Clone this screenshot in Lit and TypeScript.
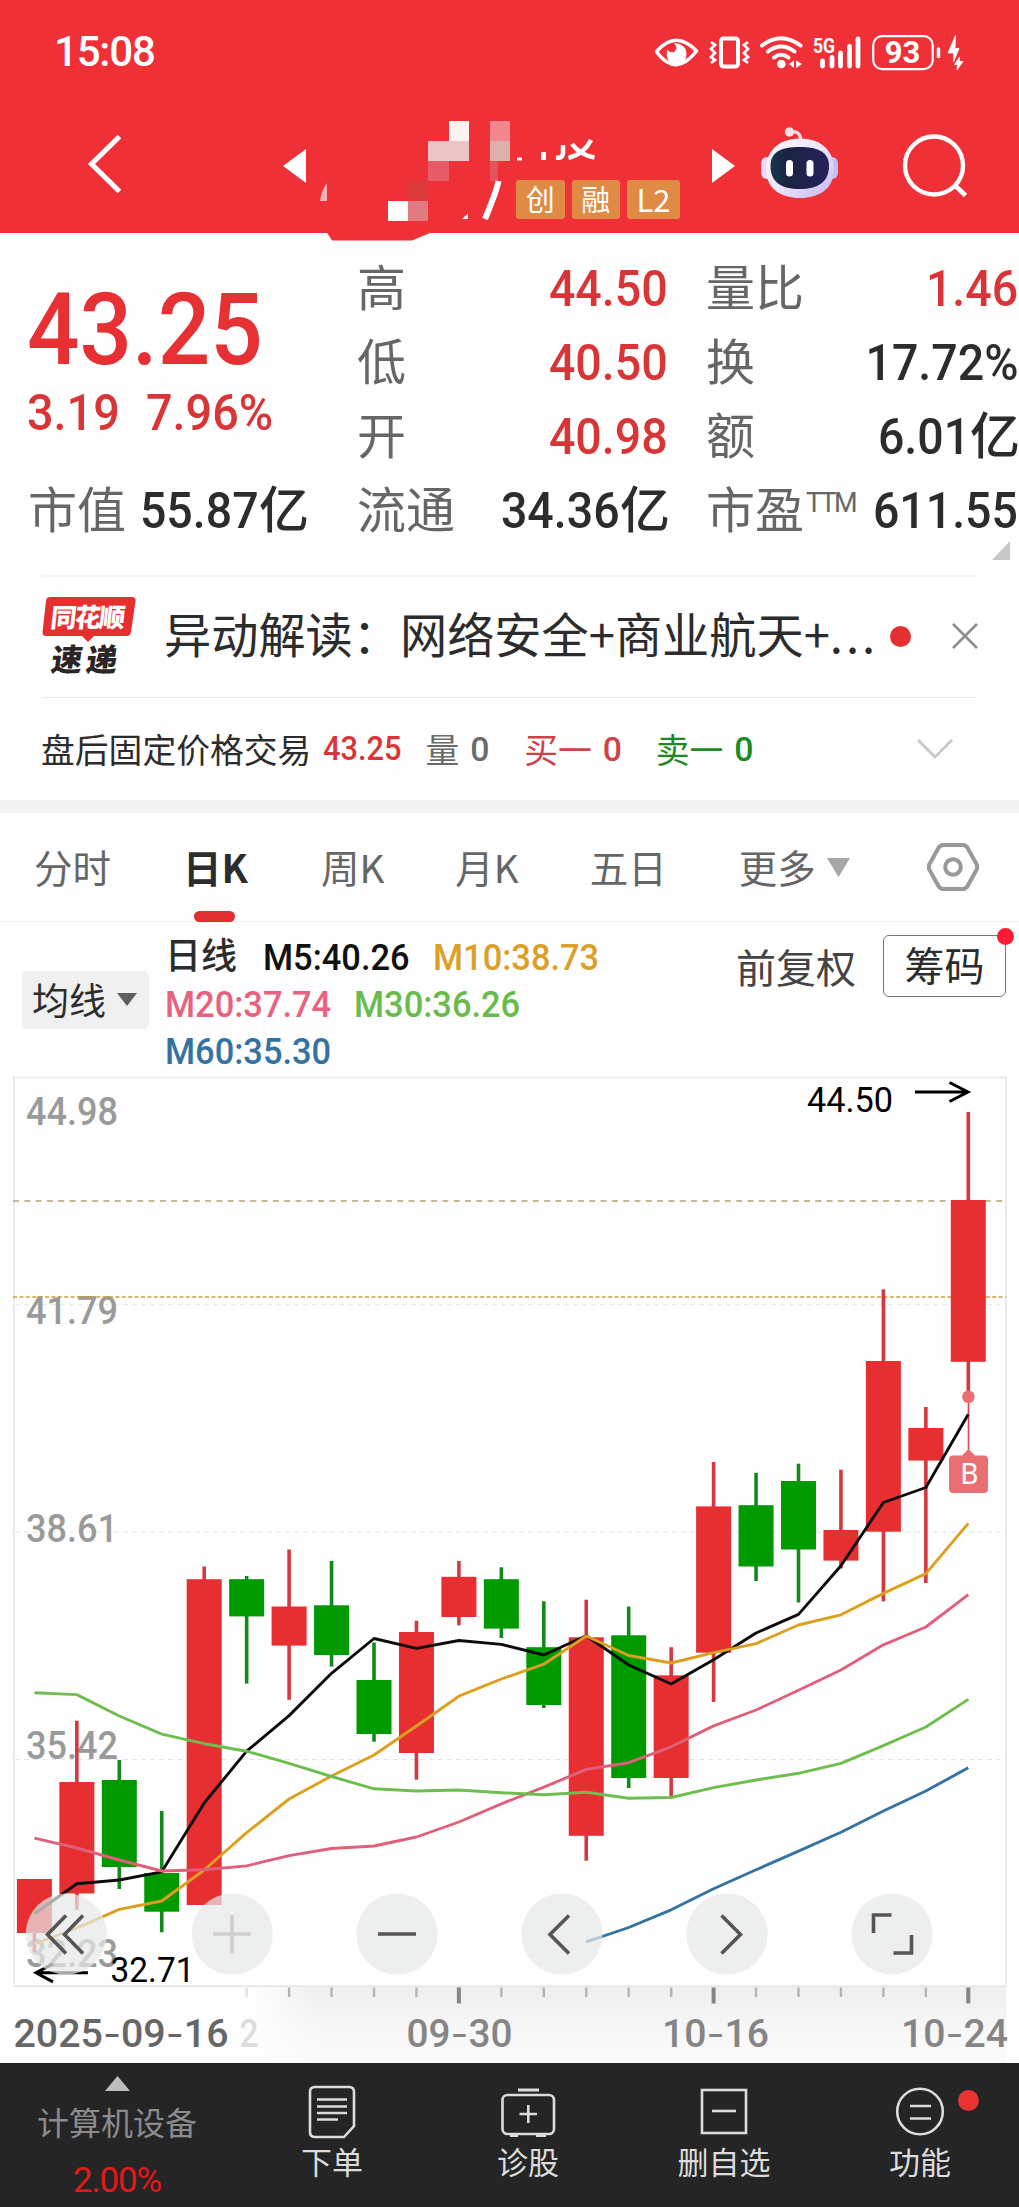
import { LitElement, html, svg, css } from "lit";
import { customElement } from "lit/decorators.js";

const X0 = 34.4;
const STEP = 42.45;
const TOP = 1070;
const cx = (i: number) => X0 + STEP * i;
const py = (v: number) => v - TOP;

// [direction, body top, body bottom, wick top, wick bottom]
const candles: [string, number, number, number, number][] = [
  ["up", 1879, 1933, 1879, 1952],
  ["up", 1782, 1893.5, 1720.7, 1909.7],
  ["down", 1780, 1867, 1760, 1889],
  ["down", 1873, 1911.7, 1811, 1932.3],
  ["up", 1579.2, 1905, 1566.5, 1905],
  ["down", 1579.2, 1616.4, 1576, 1683.6],
  ["up", 1606.5, 1645.6, 1549.5, 1699.8],
  ["down", 1605.3, 1655, 1561, 1666.6],
  ["down", 1680, 1734, 1642.5, 1741.7],
  ["up", 1632, 1753, 1620.7, 1779.7],
  ["up", 1576.8, 1617, 1561, 1625.4],
  ["down", 1579.2, 1628.6, 1567.3, 1638],
  ["down", 1647.2, 1705, 1601.3, 1708],
  ["up", 1637.3, 1835.8, 1599.7, 1860.7],
  ["down", 1635.3, 1778, 1606.5, 1788],
  ["up", 1675.3, 1778, 1647.2, 1796.7],
  ["up", 1506.4, 1652.7, 1462, 1702],
  ["down", 1505.2, 1566.5, 1472.8, 1581],
  ["down", 1481, 1549.5, 1463.7, 1602.5],
  ["up", 1530, 1560.6, 1469.7, 1568.5],
  ["up", 1361, 1531.7, 1289.3, 1601.3],
  ["up", 1428, 1460.6, 1407, 1583],
  ["up", 1200, 1361.8, 1112, 1396.5],
];

const averages: { cls: string; from: number; ys: number[] }[] = [
  { cls: "m5", from: 0, ys: [1913.7, 1883.7, 1880, 1871.8, 1803, 1751.2, 1715.6, 1673.3, 1638.5, 1648.4, 1640.5, 1644.4, 1655, 1635.7, 1665, 1684, 1659.8, 1633, 1614.4, 1565.7, 1502.5, 1487.5, 1414.3] },
  { cls: "m10", from: 0, ys: [1944, 1928, 1909.4, 1901, 1870, 1832.6, 1799, 1776, 1755, 1726, 1696.2, 1679, 1664.2, 1636, 1655.5, 1663, 1652.7, 1643.6, 1625, 1614.8, 1593.4, 1573.6, 1523.4] },
  { cls: "m20", from: 0, ys: [1838.2, 1848, 1860, 1871, 1869.8, 1865.9, 1855.6, 1848.5, 1846, 1837, 1822, 1803.8, 1787.2, 1769.4, 1762.7, 1746.8, 1725.9, 1710, 1690.3, 1670, 1644.8, 1627, 1594.6] },
  { cls: "m30", from: 0, ys: [1692.7, 1694.6, 1716, 1734.2, 1743.7, 1751.2, 1763.4, 1776.5, 1788.8, 1791, 1790, 1792.7, 1794.7, 1792.3, 1798.2, 1797.5, 1787.6, 1780, 1773.3, 1763.4, 1745.7, 1727, 1699.4] },
  { cls: "m60", from: 13, ys: [1941.8, 1927.5, 1909.8, 1888.8, 1869.8, 1851.2, 1832.2, 1811, 1791, 1767.8] },
];

@customElement("kline-chart")
export class KlineChart extends LitElement {
  static styles = css`
    :host { display: block; height: 993px; position: relative; }
    svg { display: block; }
    text { font-family: Roboto, "Noto Sans CJK SC", sans-serif; }
    .frame { fill: none; stroke: #e6e6e8; stroke-width: 1.6; }
    .grid { stroke: #e6e6e6; stroke-width: 1; stroke-dasharray: 5 4; }
    .price { stroke: #b3a273; stroke-width: 1.5; stroke-dasharray: 6 5.3; }
    .cost { stroke: #cf9d3c; stroke-width: 1.6; stroke-dasharray: 4 2.4; }
    .up { fill: #e72f32; }
    .down { fill: #009900; }
    .wick.up { fill: #d23a3f; }
    .wick.down { fill: #12891a; }
    .ma { fill: none; stroke-width: 2.9; stroke-linejoin: round; }
    .m5 { stroke: #0c0c0c; }
    .m10 { stroke: #dc9f1e; }
    .m20 { stroke: #e0607b; }
    .m30 { stroke: #6fbd50; }
    .m60 { stroke: #35729f; }
    .level { fill: #9a9a9a; font-size: 38.5px; font-weight: 500; }
    .mark { fill: #000; font-size: 35px; font-weight: 400; }
    .arrow { fill: none; stroke: #000; stroke-width: 3; }
    .date { fill: #858585; font-size: 38.5px; font-weight: 500; }
    .date.first { fill: #666; }
    .date.ghost { fill: #dcdcdc; }
    .dash { font-family: Inter, sans-serif; font-weight: 400; }
    .tick { fill: #b4b4b4; }
    .tick.major { fill: #858585; }
    .buy { fill: #ea6f73; }
    .b { fill: #fff; font-size: 29px; font-weight: 400; }
    .knob { fill: rgba(230, 231, 232, 0.72); }
    .glyph { fill: none; stroke: #555; stroke-width: 3.6; }
    .glyph.off { stroke: #cfcfcf; }
  `;

  private label(cls: string, s: string, x: number, base: number, w: number) {
    return svg`<text class=${cls} x=${x} y=${py(base)} textLength=${w} lengthAdjust="spacingAndGlyphs">${s}</text>`;
  }

  private date(cls: string, parts: string[], x: number, w: number) {
    return svg`<text class=${cls} x=${x} y=${py(2046.5)} textLength=${w} lengthAdjust="spacingAndGlyphs">${parts.map((p, i) =>
      i ? svg`<tspan class="dash">-</tspan><tspan>${p}</tspan>` : svg`<tspan>${p}</tspan>`)}</text>`;
  }

  render() {
    const knobs = [66.3, 232.3, 397, 562, 727, 892];
    return html`<svg width="1019" height="993" viewBox="0 0 1019 993">
      <defs>
        <linearGradient id="axis" x1="0" y1="0" x2="0" y2="1">
          <stop offset="0" stop-color="#eeeeee" /><stop offset="0.55" stop-color="#f7f7f7" /><stop offset="1" stop-color="#fbfbfb" />
        </linearGradient>
        <linearGradient id="fade" x1="0" y1="0" x2="1" y2="0">
          <stop offset="0" stop-color="#fdfdfd" /><stop offset="0.8" stop-color="#fdfdfd" /><stop offset="1" stop-color="#fdfdfd" stop-opacity="0" />
        </linearGradient>
      </defs>
      <rect x="14" y=${py(1986)} width="992" height="77" fill="url(#axis)" />
      <rect x="0" y=${py(1987)} width="320" height="76" fill="url(#fade)" />
      <rect class="frame" x="14" y=${py(1077.5)} width="992" height="908.7" />
      ${[1304.7, 1532, 1759.5].map((y) => svg`<line class="grid" x1="15" x2="1006" y1=${py(y)} y2=${py(y)} />`)}
      <line class="price" x1="13" x2="1006" y1=${py(1201)} y2=${py(1201)} />
      ${this.label("level", "44.98", 26, 1125, 92)}
      ${this.label("level", "41.79", 26, 1324, 92)}
      ${this.label("level", "38.61", 26, 1542, 92)}
      ${this.label("level", "35.42", 26, 1759, 92)}
      ${this.label("level", "32.23", 26, 1967, 92)}
      <line class="cost" x1="13" x2="1006" y1=${py(1297)} y2=${py(1297)} />
      ${candles.map(([d, t, b, h, l], i) => svg`
        <rect class="wick ${d}" x=${cx(i) - 1.8} y=${py(h)} width="3.6" height=${l - h} />
        <rect class=${d} x=${cx(i) - 17.5} y=${py(t)} width="35" height=${b - t} />`)}
      <rect x="967.7" y=${py(1396)} width="1.6" height="56" fill="#d9464b" />
      <circle class="buy" cx="968.4" cy=${py(1396.8)} r="6.3" />
      ${averages.map((a) => svg`<polyline class="ma ${a.cls}" points=${a.ys.map((y, i) => `${cx(a.from + i)},${py(y)}`).join(" ")} />`)}
      <path class="buy" d="M953 385.5 H962 L968.5 379 L975 385.5 H984 Q988 385.5 988 389.5 V419 Q988 423 984 423 H953 Q949 423 949 419 V389.5 Q949 385.5 953 385.5Z" />
      <text class="b" x="969.5" y="414" text-anchor="middle">B</text>
      ${this.label("mark", "44.50", 807, 1112, 86)}
      <path class="arrow" d="M915 22 H968 M949.5 12.5 L968 22 L949.5 31.5" />
      ${this.label("mark", "32.71", 110.5, 1982, 84)}
      <path class="arrow" d="M88 902.8 H36 M53 893.8 L36 902.8 L53 911.8" />

      ${knobs.map((x) => svg`<circle class="knob" cx=${x} cy="864" r="40.6" />`)}
      <path class="glyph" d="M66 845.5 L47.5 864.5 L66 883.5 M83 845.5 L64.5 864.5 L83 883.5" />
      <path class="glyph off" d="M213 864 H250.5 M232 845 V883" />
      <path class="glyph" d="M378 864 H416" />
      <path class="glyph" d="M569 845.5 L550 864.5 L569 883.5" />
      <path class="glyph" d="M721.5 845.5 L740.5 864.5 L721.5 883.5" />
      <path class="glyph" d="M873.5 863 V845 H891.5 M911.5 865 V883 H893.5" />

      ${Array.from({ length: 18 }, (_, k) => k + 5).map((i) => {
        const major = i === 10 || i === 16 || i === 22;
        return svg`<rect class="tick ${major ? "major" : ""}" opacity=${i === 5 ? 0.35 : 1} x=${cx(i) - (major ? 2 : 1.2)} y="917.5" width=${major ? 4 : 2.4} height=${major ? 16 : 9.5} />`;
      })}
      ${this.date("date first", ["2025", "09", "16"], 13.5, 215)}
      ${this.date("date ghost", ["2"], 239.5, 19)}
      ${this.date("date", ["09", "30"], 406.5, 106)}
      ${this.date("date", ["10", "16"], 662, 107)}
      ${this.date("date", ["10", "24"], 901, 107)}
    </svg>`;
  }
}

@customElement("app-root")
export class AppRoot extends LitElement {
  static styles = css`
    :host {
      display: block; width: 1019px; height: 2207px; overflow: hidden; background: #fefefe;
      font-family: Roboto, "Noto Sans CJK SC", sans-serif; color: #2c2c2c;
    }
    * { box-sizing: border-box; }
    svg { display: block; flex: none; }
    .head { height: 233px; background: #ef3037; color: #fff; }
    .status { height: 100px; padding: 3px 0 0 54px; display: flex; align-items: center; }
    .time { font-size: 42px; font-weight: 500; letter-spacing: -1.2px; flex: 1; }
    .bar { height: 133px; display: flex; }
    .back { margin: 33px 0 0 85px; }
    .prev { margin: 49px 0 0 158px; }
    .title { position: relative; width: 380px; margin-left: 4px; height: 133px; padding: 80px 0 0 206px; }
    .mask { position: absolute; left: 0; top: 0; }
    .tags { display: flex; gap: 7px; }
    .tag { height: 39px; width: 48.5px; line-height: 37px; background: #e08b45; border-radius: 3px; font-size: 29px; text-align: center; font-family: "Noto Sans CJK SC", sans-serif; }
    .tag.wide { width: 53px; font-size: 31px; }
    .next { margin: 49px 0 0 22px; }
    .bot { margin: 24px 0 0 24px; }
    .find { margin: 31px 0 0 61px; }

    .quote { height: 342px; display: grid; grid-template-columns: 357px 349px 313px; padding-top: 19px; position: relative; }
    .price { font-size: 101px; line-height: 97px; font-weight: 500; color: #e63033; padding: 29px 0 0 27px; height: 128px; white-space: nowrap; }
    .price span { display: inline-block; transform: scaleX(0.915); transform-origin: left; }
    .chg { display: flex; gap: 20px; font-size: 50px; line-height: 60px; height: 74px; font-weight: 500; color: #d93537; padding: 3px 0 0 27px; margin-bottom: 20px; }
    .chg span { transform: scaleX(0.935); transform-origin: left; }
    .row { display: flex; height: 74px; align-items: center; justify-content: space-between; font-size: 50px; line-height: 74px; font-weight: 500; padding-right: 1px; }
    .v { display: flex; justify-content: flex-end; flex: 1; width: 0; white-space: nowrap; }
    .v span { transform: scaleX(0.93); transform-origin: right; }
    .v i { font-style: normal; width: 48px; }
    .k { color: #666; font-weight: 400; font-size: 49px; display: flex; margin-bottom: 8px; font-family: "Noto Sans CJK SC", sans-serif; }
    .k sup { font-size: 27px; line-height: 1; margin-top: 20px; vertical-align: baseline; font-family: Roboto, sans-serif; font-weight: 400; letter-spacing: -2.2px; padding-left: 2px; }
    .mid .row { padding-right: 38px; }
    .row.cap { padding-left: 28px; padding-right: 50px; }
    .red { color: #d93537; }
    .corner { position: absolute; right: 9px; top: 308px; }

    .news { margin: 0 43px 0 42px; height: 123px; display: flex; align-items: center; border-top: 2px solid #f5f5f5; border-bottom: 1.5px solid #ececec; }
    .logo { position: relative; width: 96px; height: 80px; flex: none; margin-bottom: 2px; }
    .logo span { position: absolute; font-family: "Noto Sans CJK SC", sans-serif; font-weight: 900; white-space: nowrap; }
    .l1 { color: #fff; font-size: 26px; line-height: 28px; left: 9px; top: 6px; letter-spacing: -1.8px; transform: skewX(-6deg); }
    .l2 { color: #2c2526; font-size: 31px; line-height: 31px; left: 10px; top: 46px; letter-spacing: 4px; transform: skewX(-8deg); }
    .headline { font-size: 47.2px; white-space: nowrap; margin-left: 26px; width: 726px; flex: none; margin-bottom: 9px; font-family: "Noto Sans CJK SC", sans-serif; }
    .headline i { font-style: normal; letter-spacing: 3px; }
    .dot { width: 21px; height: 21px; border-radius: 50%; background: #e72f32; margin-right: 40px; flex: none; margin-bottom: 2px; }
    .news .close { margin-bottom: 2px; }

    .after { height: 102px; display: flex; align-items: center; padding-left: 41px; font-size: 33.8px; padding-bottom: 1px; }
    .after b { font-weight: 500; margin-left: 12px; width: 80px; }
    .after b span { display: inline-block; transform: scaleX(0.91); transform-origin: left; }
    .after .q { color: #6a6a6a; margin-left: 22px; }
    .after .buy { color: #cc4247; margin-left: 38px; }
    .after .sell { color: #1c8a20; margin-left: 37px; }
    .after .q, .after .buy, .after .sell { display: flex; align-items: center; }
    .after em { font-style: normal; margin-left: 11px; font-weight: 500; width: 16px; margin-top: 2px; }
    .fold { margin-left: 166px; }
    .band { height: 13px; background: #f3f3f3; }

    .tabs { height: 109px; display: flex; align-items: center; border-bottom: 1.5px solid #f0eeee; color: #666; font-size: 38.5px; position: relative; padding-left: 34px; font-family: "Noto Sans CJK SC", sans-serif; }
    .tab { position: relative; line-height: 106px; height: 109px; }
    .tab.on { color: #2c2c2c; font-weight: 700; margin-left: 72px; }
    .tab.on::after { content: ""; position: absolute; left: 11px; bottom: 0; width: 41px; height: 11px; border-radius: 6px; background: #e12f30; }
    .w { margin-left: 73px; }
    .m { margin-left: 71px; }
    .f { margin-left: 71px; }
    .e { margin-left: 72px; }
    .more { margin-left: 11px; }
    .gear { margin-left: 76px; }

    .legend { height: 148px; display: flex; }
    .pick { margin: 49px 0 0 22px; width: 127px; height: 58px; background: #f0f0f0; border-radius: 5px; display: flex; align-items: center; padding: 0 0 2px 10px; font-size: 37px; font-family: "Noto Sans CJK SC", sans-serif; gap: 11px; }
    .mas { margin: 12px 0 0 16px; width: 480px; display: grid; align-content: flex-start; font-size: 37.5px; line-height: 47px; font-weight: 500; }
    .line { display: flex; height: 47px; }
    .line span { transform: scaleX(0.918); transform-origin: left; white-space: nowrap; }
    .line .d { transform: none; font-size: 36px; width: 98px; }
    .m5 { color: #111; width: 170px; }
    .m10 { color: #dca029; }
    .m20 { color: #e8627f; width: 189px; }
    .m30 { color: #69bb4b; }
    .m60 { color: #35729f; }
    .adj { margin: 16px 0 0 91px; font-size: 40px; line-height: 56px; color: #444; width: 147px; font-family: "Noto Sans CJK SC", sans-serif; }
    .chip { position: relative; margin-top: 13px; width: 123px; height: 62px; border: 1.5px solid #777; border-radius: 6px; font-size: 40px; line-height: 57px; text-align: center; font-family: "Noto Sans CJK SC", sans-serif; }
    .chip::after { content: ""; position: absolute; right: -9px; top: -8px; width: 17px; height: 17px; border-radius: 50%; background: #fb1c33; }

    .nav { height: 144px; background: #252525; display: grid; grid-template-columns: 234px repeat(4, 196px); color: #dcdcdc; }
    .sector { display: flex; flex-direction: column; align-items: center; padding-top: 13px; color: #8b8b8e; font-size: 32px; line-height: 40px; }
    .sector svg { margin-bottom: 13px; }
    .sector b { color: #e0191a; font-size: 35px; font-weight: 400; margin-top: 17px; letter-spacing: -1.2px; }
    .item { position: relative; display: flex; flex-direction: column; align-items: center; padding-top: 18px; font-size: 31px; line-height: 40px; }
    .item svg { margin-bottom: 3px; }
    .item .new { position: absolute; left: 136px; top: 27px; width: 21px; height: 21px; border-radius: 50%; background: #e93232; }
    .thin { fill: none; stroke: #dcdcdc; stroke-width: 2.6; }
  `;

  private row(k: unknown, v: string, unit = "", cls = "") {
    return html`<div class="row"><span class="k">${k}</span><div class="v ${cls}"><span>${v}</span>${unit ? html`<i>${unit}</i>` : ""}</div></div>`;
  }

  private statusIcons() {
    return html`<svg width="364" height="100" viewBox="655 0 364 100" fill="none" stroke="#fff">
      <path d="M657 48.5 Q676 27 696.500 48.500 Q676 75 657 50Z" transform="translate(0 0.500)" stroke-width="3.600" stroke-linejoin="round" />
      <path d="M674 41 Q679 46 674 50 Q670 51 667 47.500 Q665 62 677 63 Q687 62 686.500 51 Q686 42 674 41Z" fill="#fff" stroke="none" />
      <rect x="721" y="36.500" width="17" height="28" rx="2.500" stroke-width="4" />
      <path d="M711 40 L715 43 L711 47 L715 51 L711 55 L715 58 L711 61 M748 40 L744 43 L748 47 L744 51 L748 55 L744 58 L748 61" stroke-width="2.800" />
      <path d="M762 43.500 Q781 29 800.500 43.500" stroke-width="4" stroke-linecap="round" />
      <path d="M768 49.500 Q781 39.500 794.500 49.500" stroke-width="4" stroke-linecap="round" />
      <path d="M774 55.500 Q781 50 788.500 55.500" stroke-width="4" stroke-linecap="round" />
      <circle cx="781.300" cy="62" r="4.300" fill="#fff" stroke="none" />
      <path d="M789 62 L794 58.500 V66Z M796 58.500 L802 62 L796 66Z" fill="#fff" stroke="none" />
      <path d="M822.500 59 V64 M832 55.500 V64 M840.500 51 V64 M849.500 44.500 V64 M858 37 V64" stroke-width="4.800" stroke-linecap="round" />
      <text x="813" y="51" font-size="20" font-weight="700" fill="#fff" stroke="none" textLength="22" lengthAdjust="spacingAndGlyphs" font-family="Roboto">5G</text>
      <rect x="873.200" y="34.200" width="59.500" height="33" rx="9" stroke-width="2.200" />
      <path d="M938.500 47 V54.500" stroke-width="3.500" stroke-linecap="round" />
      <text x="902.500" y="61" font-size="31" font-weight="700" fill="#fff" stroke="none" text-anchor="middle" font-family="Roboto">93</text>
      <path d="M955.500 33.500 L948 51 H953.500 V60 L959 46.500 H955Z M959.500 55 L954.500 62.500 H957.500 L957 68 L963 59.500 H959.500Z" fill="#fff" stroke="#fff" stroke-width="0.800" />
    </svg>`;
  }

  private mask() {
    return html`<svg class="mask" width="380" height="142" viewBox="310 100 380 142">
      <path fill="#ef3037" d="M327 232.500 L332 240.500 H412 L431 232.500Z" />
      <path fill="#f8b5b8" d="M327 183 V201 H320 Q321 191 327 183Z" />
      <rect x="449" y="121" width="20" height="20" fill="#fff3f2" />
      <rect x="428" y="141" width="41" height="20" fill="#ecc3c7" />
      <rect x="428" y="161" width="21" height="20" fill="#e55b66" />
      <rect x="408" y="181" width="20" height="20" fill="#dc3a3b" />
      <rect x="388" y="201" width="20" height="20" fill="#fffdfc" />
      <rect x="408" y="201" width="20" height="20" fill="#e27a82" />
      <rect x="490" y="121" width="20" height="20" fill="#f28790" />
      <rect x="490" y="141" width="20" height="20" fill="#dcb0ad" />
      <rect x="490" y="161" width="8" height="20" fill="#e4525d" />
      <path fill="none" stroke="#fff" stroke-width="6" d="M498.500 181 Q497 190 485 219" />
      <path fill="#fff" d="M468 213.500 V219 H462Z M517 157.500 h5 v3 h-5z M541 152 h5 v8 h-5z" />
      <path fill="none" stroke="#fff" stroke-width="4.500" d="M563 145 V152 Q563 159 556 157.500 M591 140 Q584 154 568.500 158 M572 144 Q580 155 594.500 157.500" />
    </svg>`;
  }

  private robot() {
    return html`<svg class="bot" width="80" height="78" viewBox="759 124 80 78">
      <defs>
        <linearGradient id="shell" x1="0" y1="0" x2="1" y2="1"><stop offset="0" stop-color="#fff5f7" /><stop offset="0.5" stop-color="#ece6fb" /><stop offset="1" stop-color="#c3b4f0" /></linearGradient>
        <linearGradient id="visor" x1="0" y1="0" x2="1" y2="0"><stop offset="0" stop-color="#17364f" /><stop offset="0.3" stop-color="#1a2440" /><stop offset="1" stop-color="#26215c" /></linearGradient>
      </defs>
      <path d="M790 132 Q801 130 800.500 141" fill="none" stroke="#f2d5e6" stroke-width="3.500" />
      <circle cx="789.500" cy="132" r="4.700" fill="#fbdfe6" />
      <rect x="761" y="157" width="12" height="22" rx="6" fill="#e4dcf8" />
      <rect x="826" y="157" width="12" height="22" rx="6" fill="#c6bdf5" />
      <path d="M800 138.500 C823 138.500 834 153 834 169 C834 189 819 198 800 198 C781 198 766 189 766 169 C766 153 777 138.500 800 138.500Z" fill="url(#shell)" />
      <path d="M799.500 147 C818 147 829 152 829 166 C829 182 818 189 799.500 189 C781 189 770.500 182 770.500 166 C770.500 152 781 147 799.500 147Z" fill="url(#visor)" />
      <rect x="786" y="160" width="7" height="16.500" rx="3.500" fill="#fff" />
      <rect x="806.500" y="160" width="7" height="16.500" rx="3.500" fill="#fff" />
    </svg>`;
  }

  render() {
    return html`
      <header class="head">
        <div class="status"><span class="time">15:08</span>${this.statusIcons()}</div>
        <div class="bar">
          <svg class="back" width="40" height="64" viewBox="85 133 40 64"><path d="M119.500 136.500 L91.500 164 L119.500 191.500" fill="none" stroke="#fff" stroke-width="5" /></svg>
          <svg class="prev" width="23" height="34"><path d="M23 0 V34 L0 17Z" fill="#fff" /></svg>
          <div class="title">
            ${this.mask()}
            <div class="tags"><span class="tag">创</span><span class="tag">融</span><span class="tag wide">L2</span></div>
          </div>
          <svg class="next" width="23" height="34"><path d="M0 0 V34 L23 17Z" fill="#fff" /></svg>
          ${this.robot()}
          <svg class="find" width="72" height="72" viewBox="900 130 72 72"><circle cx="934" cy="164.500" r="29" fill="none" stroke="#fff" stroke-width="4.400" /><path d="M954.500 184 L965.500 194.500" stroke="#fff" stroke-width="4.600" /></svg>
        </div>
      </header>

      <section class="quote">
        <div>
          <div class="price"><span>43.25</span></div>
          <div class="chg"><span>3.19</span><span>7.96%</span></div>
          <div class="row cap"><span class="k">市值</span><div class="v"><span>55.87</span><i>亿</i></div></div>
        </div>
        <div class="mid">
          ${this.row("高", "44.50", "", "red")}${this.row("低", "40.50", "", "red")}${this.row("开", "40.98", "", "red")}${this.row("流通", "34.36", "亿")}
        </div>
        <div>
          ${this.row("量比", "1.46", "", "red")}${this.row("换", "17.72%")}${this.row("额", "6.01", "亿")}${this.row(html`市盈<sup>TTM</sup>`, "611.55")}
        </div>
        <svg class="corner" width="18" height="19"><path d="M18 0 V19 H0Z" fill="#c8c8c8" /></svg>
      </section>

      <section class="news">
        <div class="logo">
          <svg width="96" height="80" viewBox="0 0 96 80"><path d="M8 1 H90 Q94 1 93.500 5 L89 36 Q88.500 40 84.500 40 H52 L46 46 L40 40 H4 Q0 40 0.500 36 L4 5 Q4.500 1 8 1Z" fill="#e5302f" /></svg>
          <span class="l1">同花顺</span><span class="l2">速递</span>
        </div>
        <div class="headline">异动解读：网络安全+商业航天+<i>...</i></div>
        <div class="dot"></div>
        <svg class="close" width="28" height="28"><path d="M2 2 L26 26 M26 2 L2 26" stroke="#8f8f8f" stroke-width="2.600" /></svg>
      </section>

      <section class="after">
        <span>盘后固定价格交易</span><b class="red"><span>43.25</span></b>
        <span class="q">量<em>0</em></span><span class="buy">买一<em>0</em></span><span class="sell">卖一<em>0</em></span>
        <svg class="fold" width="38" height="22"><path d="M2 2 L19 19 L36 2" fill="none" stroke="#c9c9c9" stroke-width="3" /></svg>
      </section>
      <div class="band"></div>

      <nav class="tabs">
        <span class="tab">分时</span><span class="tab on">日K</span><span class="tab w">周K</span><span class="tab m">月K</span><span class="tab f">五日</span><span class="tab e">更多</span>
        <svg class="more" width="23" height="19"><path d="M0 0 H23 L11.500 19Z" fill="#a6a6a6" /></svg>
        <svg class="gear" width="54" height="52" viewBox="0 0 54 52" fill="none" stroke="#999" stroke-width="4"><path d="M16 4 H38 L41 6 L51 24 V28 L41 46 L38 48 H16 L13 46 L3 28 V24 L13 6Z" stroke-linejoin="round" /><circle cx="27" cy="26" r="7.800" /></svg>
      </nav>

      <section class="legend">
        <div class="pick">均线<svg width="20" height="13"><path d="M0 0 H20 L10 13Z" fill="#5f5f5f" /></svg></div>
        <div class="mas">
          <div class="line"><span class="d">日线</span><span class="m5">M5:40.26</span><span class="m10">M10:38.73</span></div>
          <div class="line"><span class="m20">M20:37.74</span><span class="m30">M30:36.26</span></div>
          <div class="line"><span class="m60">M60:35.30</span></div>
        </div>
        <div class="adj">前复权</div>
        <div class="chip">筹码</div>
      </section>

      <kline-chart></kline-chart>

      <footer class="nav">
        <div class="sector"><svg width="25" height="15"><path d="M12.500 0 L25 15 H0Z" fill="#bdbdbd" /></svg><span>计算机设备</span><b>2.00%</b></div>
        <div class="item">
          <svg width="60" height="60" viewBox="0 0 60 60" class="thin"><path d="M13 6 H47 Q52 6 52 11 V45 L42 56 H13 Q8 56 8 51 V11 Q8 6 13 6Z" /><path d="M15 18.500 H45 M15 25.500 H45 M15 32 H45 M15 38.500 H36" /></svg>
          <span>下单</span>
        </div>
        <div class="item">
          <svg width="60" height="60" viewBox="0 0 60 60" class="thin"><path d="M20 9 H41 M12 54.500 H20 M38 54.500 H48" stroke-width="3.200" /><rect x="4.500" y="14" width="51.500" height="39" rx="5" /><path d="M21.500 33 H39 M30.300 24 V42" /></svg>
          <span>诊股</span>
        </div>
        <div class="item">
          <svg width="60" height="60" viewBox="0 0 60 60" class="thin"><rect x="8" y="9" width="44" height="43" /><path d="M18 30 H42" /></svg>
          <span>删自选</span>
        </div>
        <div class="item">
          <svg width="60" height="60" viewBox="0 0 60 60" class="thin"><circle cx="30" cy="30.500" r="22.800" /><path d="M20 25 H41 M20 37.500 H41" /></svg>
          <span>功能</span><i class="new"></i>
        </div>
      </footer>
    `;
  }
}
